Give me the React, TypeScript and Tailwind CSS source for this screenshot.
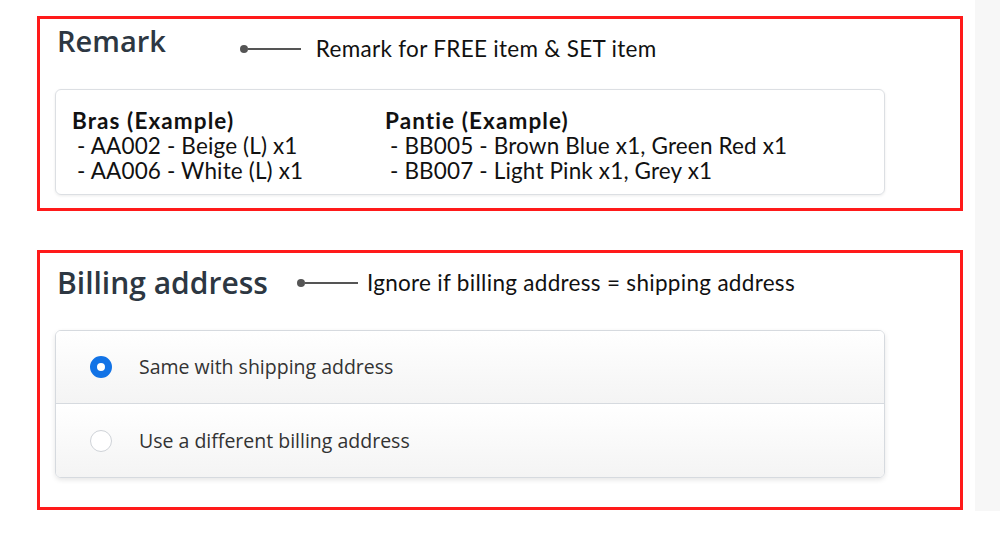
import React from "react";

const BRAS = ["- AA002 - Beige (L) x1", "- AA006 - White (L) x1"];
const PANTIES = ["- BB005 - Brown Blue x1, Green Red x1", "- BB007 - Light Pink x1, Grey x1"];

const Pointer: React.FC<{ text: string; className?: string; gap: string }> = ({ text, className, gap }) => (
  <div className={`flex items-center ${className ?? ""}`}>
    <span className="w-[8px] h-[8px] rounded-full bg-[#555]" />
    <span className="w-[53px] h-[1.5px] bg-[#555]" />
    <span className={`${gap} font-['Lato',sans-serif] text-[22.5px] text-[#111] tracking-[0.3px]`}>{text}</span>
  </div>
);

const Column: React.FC<{ title: string; lines: string[]; className?: string }> = ({ title, lines, className }) => (
  <div className={`flex flex-col font-['Lato',sans-serif] text-[22.5px] leading-[25px] text-[#111] ${className ?? ""}`}>
    <span className="font-bold tracking-[1.1px]">{title}</span>
    {lines.map((l) => (
      <span key={l} className="pl-[5px] tracking-[0.15px]">{l}</span>
    ))}
  </div>
);

const Option: React.FC<{ label: string; checked?: boolean; last?: boolean }> = ({ label, checked, last }) => (
  <div
    className={`flex items-center h-[73px] pl-[34px] bg-gradient-to-b from-[#ffffff] to-[#f4f4f4] ${
      last ? "" : "border-b border-[#d6dadf]"
    }`}
  >
    {checked ? (
      <span className="w-[22px] h-[22px] rounded-full border-[7px] border-[#1273e6] bg-white" />
    ) : (
      <span className="w-[22px] h-[22px] rounded-full border border-[#cfd3d8] bg-white" />
    )}
    <span className="ml-[27px] font-['Open_Sans',sans-serif] text-[19.5px] text-[#333]">{label}</span>
  </div>
);

export default function App() {
  return (
    <div className="flex w-[1000px] h-[533px] bg-white">
      <div className="flex flex-col w-[975px] pt-[16px] pl-[37px] gap-[39px]">
        <section className="w-[926px] h-[195px] border-[3px] border-[#ff1a1a] pl-[15px] pt-[3px]">
          <div className="flex items-start">
            <h2 className="font-['Open_Sans',sans-serif] font-semibold text-[29px] text-[#2d3742] leading-[38px] pl-[2px]">
              Remark
            </h2>
            <Pointer text="Remark for FREE item & SET item" gap="ml-[15px]" className="ml-[74px] mt-[10px]" />
          </div>
          <div className="mt-[23px] w-[830px] h-[106px] rounded-[6px] border border-[#dcdfe3] shadow-[0_1px_3px_rgba(0,0,0,0.08)] flex pl-[16px] pt-[18px]">
            <Column title="Bras (Example)" lines={BRAS} className="w-[313px]" />
            <Column title="Pantie (Example)" lines={PANTIES} />
          </div>
        </section>
        <section className="w-[926px] h-[260px] border-[3px] border-[#ff1a1a] pl-[15px] pt-[10px]">
          <div className="flex items-center">
            <h2 className="font-['Open_Sans',sans-serif] font-semibold text-[30px] text-[#2d3742] leading-[40px] pl-[2px]">
              Billing address
            </h2>
            <Pointer text="Ignore if billing address = shipping address" gap="ml-[9px]" className="ml-[29px]" />
          </div>
          <div className="mt-[27px] w-[830px] rounded-[6px] border border-[#d6dadf] overflow-hidden shadow-[0_2px_5px_rgba(0,0,0,0.1)]">
            <Option label="Same with shipping address" checked />
            <Option label="Use a different billing address" last />
          </div>
        </section>
      </div>
      <div className="w-[25px] h-[511px] bg-[#f7f7f7]" />
    </div>
  );
}
